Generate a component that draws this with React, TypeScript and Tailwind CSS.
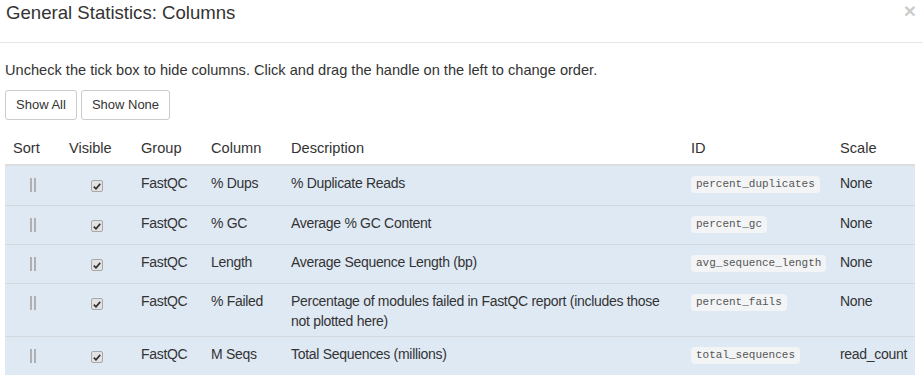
const rows = [
  { col: "% Dups", desc: ["% Duplicate Reads"], id: "percent_duplicates", scale: "None" },
  { col: "% GC", desc: ["Average % GC Content"], id: "percent_gc", scale: "None" },
  { col: "Length", desc: ["Average Sequence Length (bp)"], id: "avg_sequence_length", scale: "None" },
  {
    col: "% Failed",
    desc: ["Percentage of modules failed in FastQC report (includes those", "not plotted here)"],
    id: "percent_fails",
    scale: "None",
  },
  { col: "M Seqs", desc: ["Total Sequences (millions)"], id: "total_sequences", scale: "read_count" },
];

const grid = "grid grid-cols-[56px_72px_70px_80px_400px_149px_83px]";

function Handle() {
  return (
    <div className="flex justify-center pt-[12px] gap-[2px]">
      <span className="block w-[2px] h-[14px] bg-[#b0b0b0]" />
      <span className="block w-[2px] h-[14px] bg-[#b0b0b0]" />
    </div>
  );
}

function Tick() {
  return (
    <div className="flex justify-center pt-[14px]">
      <span className="flex items-center justify-center w-[12px] h-[12px] rounded-[2px] border border-[#a8a8a8] bg-[#e2e2e2]">
        <svg width="8" height="7" viewBox="0 0 8 7">
          <path d="M0.8 3.6 L3 5.8 L7.2 0.9" fill="none" stroke="#333" strokeWidth="1.7" />
        </svg>
      </span>
    </div>
  );
}

export default function App() {
  return (
    <div className="w-[923px] h-[380px] bg-white text-[#333] font-['Liberation_Sans',Arial,sans-serif] text-[14px] leading-[20px] overflow-hidden">
      <div className="h-[43px] border-b border-[#e5e5e5] flex justify-between">
        <h4 className="pl-[6px] pt-[3px] text-[18.6px] leading-[20px] font-normal">General Statistics: Columns</h4>
        <span className="pr-[7px] pt-0 text-[21px] leading-[21px] font-bold text-black opacity-20">×</span>
      </div>

      <div className="px-[5px]">
        <p className="mt-[17px] text-[14.6px]">
          Uncheck the tick box to hide columns. Click and drag the handle on the left to change order.
        </p>
        <div className="mt-[10px] flex gap-[4px]">
          <button className="h-[30px] px-[10px] text-[13px] border border-[#ccc] rounded-[3px] bg-white text-[#333]">
            Show All
          </button>
          <button className="h-[30px] px-[10px] text-[13px] border border-[#ccc] rounded-[3px] bg-white text-[#333]">
            Show None
          </button>
        </div>

        <div className="mt-[8px] w-[910px]">
          <div className={`${grid} border-b-2 border-[#ddd] text-[14.6px]`}>
            {["Sort", "Visible", "Group", "Column", "Description", "ID", "Scale"].map((h) => (
              <div key={h} className="px-[8px] pt-[10px] pb-[6px]">
                {h}
              </div>
            ))}
          </div>
          {rows.map((r, i) => (
            <div
              key={r.id}
              className={`${grid} min-h-[39px] bg-[#dfe9f3] tracking-[-0.3px] ${i > 0 ? "border-t border-[#d3d8dd]" : ""}`}
            >
              <Handle />
              <Tick />
              <div className="px-[8px] pt-[7px] pb-[5px]">FastQC</div>
              <div className="px-[8px] pt-[7px] pb-[5px]">{r.col}</div>
              <div className="px-[8px] pt-[7px] pb-[5px]">
                {r.desc.map((line) => (
                  <div key={line} className="whitespace-nowrap">
                    {line}
                  </div>
                ))}
              </div>
              <div className="pl-[8px] pt-[10px] pb-[5px]">
                <code className="block w-fit px-[5px] h-[17px] leading-[17px] rounded-[4px] bg-[#f2f4f6] text-[#555] text-[11px] tracking-normal font-['Liberation_Mono','DejaVu_Sans_Mono',monospace]">
                  {r.id}
                </code>
              </div>
              <div className="px-[8px] pt-[7px] pb-[5px]">{r.scale}</div>
            </div>
          ))}
        </div>
      </div>
    </div>
  );
}
